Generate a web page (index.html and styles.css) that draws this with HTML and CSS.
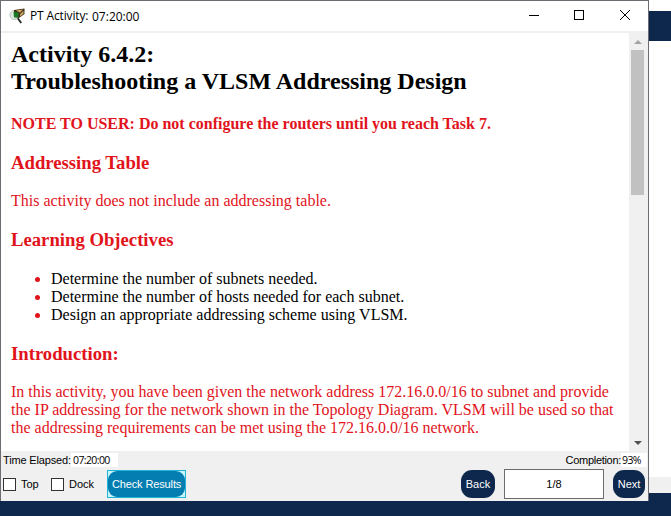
FILE: index.html
```html
<!DOCTYPE html>
<html lang="en">
<head>
<meta charset="utf-8">
<title>PT Activity</title>
<link rel="stylesheet" href="styles.css">
</head>
<body>
<div class="desktop">
  <main class="window">
    <header class="titlebar">
      <svg class="app-icon" width="16" height="16" viewBox="0 0 16 16">
        <circle cx="5.5" cy="7" r="4.6" fill="#dde8e3" stroke="#b4c4bd"/>
        <path d="M5 2 L15.5 0.5 L15.5 6 L10 10 L5 9 Z" fill="#3d331b"/>
        <path d="M7 2.6 L14 1.6 L11 4.4 Z" fill="#e3a965"/>
        <path d="M11 6 L14.5 2.7 L14.5 5.8 L11 8.5 Z" fill="#c9a46a"/>
        <path d="M4.5 4 L9.5 4.5 L9.5 9 L5 9.5 Z" fill="#187a24"/>
        <path d="M8.7 10.3 L12.3 15" stroke="#222" stroke-width="1.8"/>
      </svg>
      <span class="title">PT Activity:</span>
      <span class="clock">07:20:00</span>
      <svg class="controls" width="104" height="12" viewBox="0 0 104 12" fill="none" stroke="#000">
        <path d="M0 6.5H10"/>
        <rect x="45.5" y="1.5" width="9" height="9"/>
        <path d="M91 1L101 11M101 1L91 11"/>
      </svg>
    </header>
    <div class="viewport">
      <article class="document">
        <h1>Activity 6.4.2:<br>Troubleshooting a VLSM Addressing Design</h1>
        <p class="note">NOTE TO USER: Do not configure the routers until you reach Task 7.</p>
        <h2>Addressing Table</h2>
        <p>This activity does not include an addressing table.</p>
        <h2 class="objectives">Learning Objectives</h2>
        <ul>
          <li><span>Determine the number of subnets needed.</span></li>
          <li><span>Determine the number of hosts needed for each subnet.</span></li>
          <li><span>Design an appropriate addressing scheme using VLSM.</span></li>
        </ul>
        <h2>Introduction:</h2>
        <p>In this activity, you have been given the network address 172.16.0.0/16 to subnet and provide<br>the IP addressing for the network shown in the Topology Diagram. VLSM will be used so that<br>the addressing requirements can be met using the 172.16.0.0/16 network.</p>
      </article>
      <div class="scrollbar">
        <svg class="arrow" width="8" height="4" viewBox="0 0 8 4"><path d="M0 4L4 0L8 4Z" fill="#a3a3a3"/></svg>
        <div class="thumb"></div>
        <svg class="arrow down" width="8" height="4" viewBox="0 0 8 4"><path d="M0 0L4 4L8 0Z" fill="#505050"/></svg>
      </div>
    </div>
    <footer class="panel">
      <div class="status">
        <span class="elapsed">Time Elapsed:</span>
        <span class="value time">07:20:00</span>
        <span class="completion">Completion:</span>
        <span class="value percent">93%</span>
      </div>
      <div class="actions">
        <span class="box"></span><span class="label top">Top</span>
        <span class="box"></span><span class="label">Dock</span>
        <span class="focus"><button class="btn check">Check Results</button></span>
        <button class="btn back">Back</button>
        <span class="page">1/8</span>
        <button class="btn next">Next</button>
      </div>
    </footer>
  </main>
  <aside class="behind">
    <div class="band"></div>
    <div class="blank"></div>
    <div class="strip"></div>
  </aside>
</div>
</body>
</html>
```
FILE: styles.css
```css
* { box-sizing: border-box; }
body { margin: 0; background: #0d274d; font: 11px/14px "Liberation Sans", Arial, sans-serif; color: #000; }
.desktop { display: flex; width: 671px; height: 516px; overflow: hidden; align-items: flex-start; }
.window { width: 649px; height: 501px; border: solid #6e6c72; border-width: 1px 1px 0 1px; background: #fff; display: flex; flex-direction: column; }
.titlebar { height: 32px; flex: none; border-bottom: 2px solid #f0f0f0; display: flex; align-items: center; padding-left: 8px; }
.app-icon { flex: none; margin-top: -1px; }
.title { font: 12px/16px "Open Sans", "Noto Sans", sans-serif; margin-left: 5px; width: 62px; letter-spacing: -0.15px; white-space: nowrap; }
.clock { font: 12px/16px "Open Sans", "Noto Sans", sans-serif; letter-spacing: 0; padding-top: 2px; }
.controls { margin-left: auto; margin-right: 15px; margin-top: -2px; }
.viewport { display: flex; height: 418px; flex: none; }
.document { flex: 1; padding: 8px 0 0 10px; font: 16px/18px "Liberation Serif", "Times New Roman", serif; color: #e1131b; white-space: nowrap; overflow: hidden; }
h1 { font-size: 24px; line-height: 27px; margin: 0 0 20px; color: #000; }
h2 { font-size: 18.7px; line-height: 22px; margin: 19px 0 18px; }
.objectives { margin-bottom: 19px; }
p, ul { margin: 0; }
.note { font-weight: bold; }
ul { padding-left: 40px; }
li span { color: #000; }
.scrollbar { width: 19px; background: #f0f0f0; display: flex; flex-direction: column; align-items: flex-start; padding: 7px 0 6px 2px; }
.arrow { margin-left: 3px; flex: none; }
.thumb { width: 13px; height: 145px; background: #c1c1c1; margin-top: 6px; flex: none; }
.down { margin-top: auto; }
.panel { flex: 1; background: #f0f0f0; }
.status { height: 18px; display: flex; align-items: center; padding-left: 2px; }
.elapsed { width: 68px; white-space: nowrap; letter-spacing: -0.15px; }
.value { background: #fff; font: 10.5px/14px "Open Sans", "Noto Sans", sans-serif; height: 14px; letter-spacing: -0.6px; white-space: nowrap; }
.time { width: 47px; padding-left: 2px; }
.completion { margin-left: auto; letter-spacing: -0.3px; }
.percent { width: 26px; padding-left: 1px; margin-right: 1px; }
.actions { display: flex; align-items: center; height: 30px; padding-left: 2px; }
.box { width: 13px; height: 13px; border: 1px solid #333; background: #fff; flex: none; }
.label { margin-left: 5px; }
.top { width: 30px; }
.focus { width: 79px; height: 28px; border: 1px solid #20b5d6; background: #c9f5fa; margin-left: 13px; display: flex; }
.btn { font: inherit; color: #fff; background: #0d274d; border: 0; padding: 0; height: 28px; border-radius: 11px; text-align: center; white-space: nowrap; }
.check { background: #047eb1; width: 77px; height: 26px; border-radius: 9px; letter-spacing: -0.12px; }
.back { width: 34px; margin-left: auto; }
.page { width: 100px; height: 30px; line-height: 28px; border: 1px solid #6b6b6b; background: #fff; text-align: center; margin: 0 9px; }
.next { width: 32px; margin-right: 3px; }
.behind { flex: 1; height: 493px; background: #fff; padding-top: 11px; display: flex; flex-direction: column; }
.band { height: 30px; background: #0d274d; }
.blank { flex: 1; }
.strip { height: 16px; background: #f0f0f0; }
```
